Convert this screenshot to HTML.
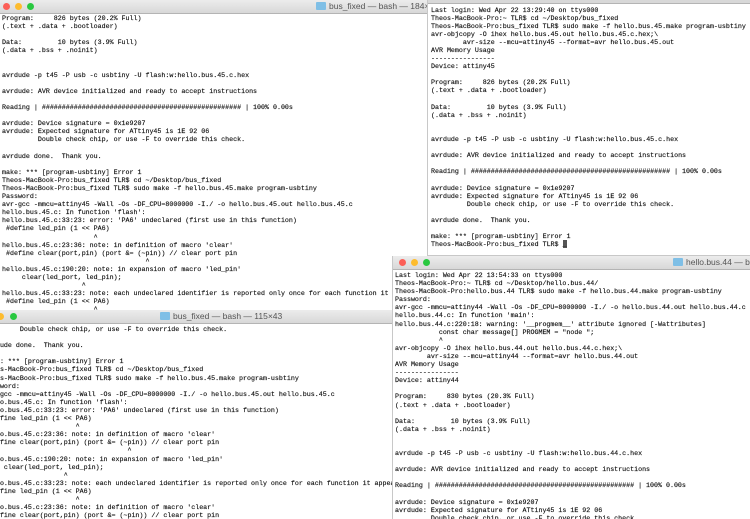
<!DOCTYPE html>
<html><head><meta charset="utf-8"><style>
body{margin:0;width:750px;height:519px;overflow:hidden;background:#fff;position:relative;font-family:"Liberation Mono",monospace}
.win{position:absolute;background:#fff;overflow:hidden}
pre{position:absolute;margin:0;font-family:"Liberation Mono",monospace;font-size:6.65px;line-height:8.1px;color:#111;white-space:pre;-webkit-text-stroke:0.15px #111}
.tb{position:absolute;left:0;right:0;height:13px;background:linear-gradient(#ececec,#d8d8d8);border-bottom:1px solid #b4b4b4}
.tt{position:absolute;top:1px;font-family:"Liberation Sans",sans-serif;font-size:8.5px;color:#555;white-space:nowrap}
.dot{position:absolute;top:3px;width:7px;height:7px;border-radius:50%}
.r{background:#fc5f57}.y{background:#fdbc2e}.g{background:#29c840}
.fold{display:inline-block;width:10px;height:8px;background:#7fbfe6;border-radius:1px;vertical-align:-1px;margin-right:3px}
</style></head><body>

<div class="win" style="left:0;top:0;width:750px;height:519px">
<div class="tb" style="top:0"><span class="dot r" style="left:3px"></span><span class="dot y" style="left:15px"></span><span class="dot g" style="left:27px"></span>
<div class="tt" style="left:316px"><span class="fold"></span>bus_fixed — bash — 184×56</div></div>
<pre style="left:2px;top:14px">Program:     826 bytes (20.2% Full)
(.text + .data + .bootloader)

Data:         10 bytes (3.9% Full)
(.data + .bss + .noinit)


avrdude -p t45 -P usb -c usbtiny -U flash:w:hello.bus.45.c.hex

avrdude: AVR device initialized and ready to accept instructions

Reading | ################################################## | 100% 0.00s

avrdude: Device signature = 0x1e9207
avrdude: Expected signature for ATtiny45 is 1E 92 06
         Double check chip, or use -F to override this check.

avrdude done.  Thank you.

make: *** [program-usbtiny] Error 1
Theos-MacBook-Pro:bus_fixed TLR$ cd ~/Desktop/bus_fixed
Theos-MacBook-Pro:bus_fixed TLR$ sudo make -f hello.bus.45.make program-usbtiny
Password:
avr-gcc -mmcu=attiny45 -Wall -Os -DF_CPU=8000000 -I./ -o hello.bus.45.out hello.bus.45.c
hello.bus.45.c: In function 'flash':
hello.bus.45.c:33:23: error: 'PA6' undeclared (first use in this function)
 #define led_pin (1 &lt;&lt; PA6)
                       ^
hello.bus.45.c:23:36: note: in definition of macro 'clear'
 #define clear(port,pin) (port &amp;= (~pin)) // clear port pin
                                    ^
hello.bus.45.c:190:20: note: in expansion of macro 'led_pin'
     clear(led_port, led_pin);
                    ^
hello.bus.45.c:33:23: note: each undeclared identifier is reported only once for each function it appears in
 #define led_pin (1 &lt;&lt; PA6)
                       ^</pre>
</div>

<div class="win" style="left:0;top:310px;width:392px;height:209px">
<div class="tb" style="top:0"><span class="dot y" style="left:-3px"></span><span class="dot g" style="left:10px"></span>
<div class="tt" style="left:160px"><span class="fold"></span>bus_fixed — bash — 115×43</div></div>
<pre style="left:-16px;top:15px">         Double check chip, or use -F to override this check.

avrdude done.  Thank you.

make: *** [program-usbtiny] Error 1
Theos-MacBook-Pro:bus_fixed TLR$ cd ~/Desktop/bus_fixed
Theos-MacBook-Pro:bus_fixed TLR$ sudo make -f hello.bus.45.make program-usbtiny
Password:
avr-gcc -mmcu=attiny45 -Wall -Os -DF_CPU=8000000 -I./ -o hello.bus.45.out hello.bus.45.c
hello.bus.45.c: In function 'flash':
hello.bus.45.c:33:23: error: 'PA6' undeclared (first use in this function)
 #define led_pin (1 &lt;&lt; PA6)
                       ^
hello.bus.45.c:23:36: note: in definition of macro 'clear'
 #define clear(port,pin) (port &amp;= (~pin)) // clear port pin
                                    ^
hello.bus.45.c:190:20: note: in expansion of macro 'led_pin'
     clear(led_port, led_pin);
                    ^
hello.bus.45.c:33:23: note: each undeclared identifier is reported only once for each function it appears in
 #define led_pin (1 &lt;&lt; PA6)
                       ^
hello.bus.45.c:23:36: note: in definition of macro 'clear'
 #define clear(port,pin) (port &amp;= (~pin)) // clear port pin</pre>
</div>

<div class="win" style="left:427px;top:0;width:323px;height:255px;border-left:1px solid #c8c8c8;border-bottom:1px solid #c8c8c8">
<div style="position:absolute;left:0;right:0;top:0;height:3px;background:#d8d8d8;border-bottom:1px solid #b4b4b4"></div>
<pre style="left:3px;top:5.5px">Last login: Wed Apr 22 13:29:40 on ttys000
Theos-MacBook-Pro:~ TLR$ cd ~/Desktop/bus_fixed
Theos-MacBook-Pro:bus_fixed TLR$ sudo make -f hello.bus.45.make program-usbtiny
avr-objcopy -O ihex hello.bus.45.out hello.bus.45.c.hex;\
        avr-size --mcu=attiny45 --format=avr hello.bus.45.out
AVR Memory Usage
----------------
Device: attiny45

Program:     826 bytes (20.2% Full)
(.text + .data + .bootloader)

Data:         10 bytes (3.9% Full)
(.data + .bss + .noinit)


avrdude -p t45 -P usb -c usbtiny -U flash:w:hello.bus.45.c.hex

avrdude: AVR device initialized and ready to accept instructions

Reading | ################################################## | 100% 0.00s

avrdude: Device signature = 0x1e9207
avrdude: Expected signature for ATtiny45 is 1E 92 06
         Double check chip, or use -F to override this check.

avrdude done.  Thank you.

make: *** [program-usbtiny] Error 1
Theos-MacBook-Pro:bus_fixed TLR$ <span style="background:#555;color:#555">_</span></pre>
</div>

<div class="win" style="left:392px;top:256px;width:358px;height:263px;border-left:1px solid #c8c8c8">
<div class="tb" style="top:0"><span class="dot r" style="left:6px"></span><span class="dot y" style="left:18px"></span><span class="dot g" style="left:30px"></span>
<div class="tt" style="left:280px"><span class="fold"></span>hello.bus.44 — bash</div></div>
<pre style="left:2px;top:15px">Last login: Wed Apr 22 13:54:33 on ttys000
Theos-MacBook-Pro:~ TLR$ cd ~/Desktop/hello.bus.44/
Theos-MacBook-Pro:hello.bus.44 TLR$ sudo make -f hello.bus.44.make program-usbtiny
Password:
avr-gcc -mmcu=attiny44 -Wall -Os -DF_CPU=8000000 -I./ -o hello.bus.44.out hello.bus.44.c
hello.bus.44.c: In function 'main':
hello.bus.44.c:220:18: warning: '__progmem__' attribute ignored [-Wattributes]
           const char message[] PROGMEM = "node ";
           ^
avr-objcopy -O ihex hello.bus.44.out hello.bus.44.c.hex;\
        avr-size --mcu=attiny44 --format=avr hello.bus.44.out
AVR Memory Usage
----------------
Device: attiny44

Program:     830 bytes (20.3% Full)
(.text + .data + .bootloader)

Data:         10 bytes (3.9% Full)
(.data + .bss + .noinit)


avrdude -p t45 -P usb -c usbtiny -U flash:w:hello.bus.44.c.hex

avrdude: AVR device initialized and ready to accept instructions

Reading | ################################################## | 100% 0.00s

avrdude: Device signature = 0x1e9207
avrdude: Expected signature for ATtiny45 is 1E 92 06
         Double check chip, or use -F to override this check.</pre>
</div>
</body></html>
